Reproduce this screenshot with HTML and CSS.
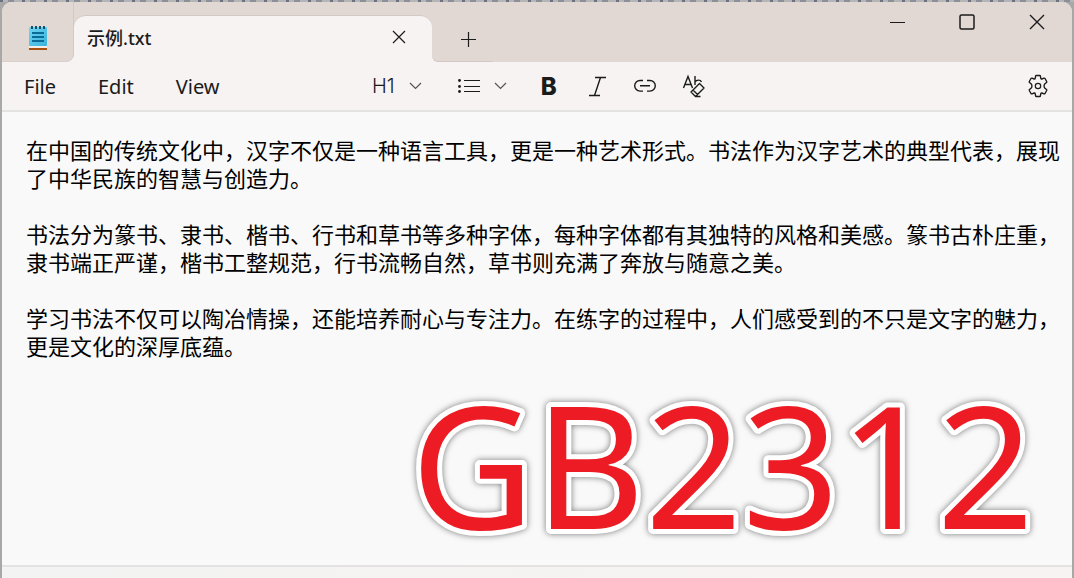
FILE: index.html
```html
<!DOCTYPE html>
<html lang="zh-CN">
<head>
<meta charset="utf-8">
<title>示例.txt</title>
<link rel="stylesheet" href="styles.css">
</head>
<body>
<div class="window">
  <header class="titlebar">
    <div class="app-icon">
      <svg width="20" height="26" viewBox="0 0 20 26" aria-hidden="true">
        <defs><linearGradient id="pad" x1="0" y1="0" x2="1" y2="1"><stop offset="0" stop-color="#6fd6f3"/><stop offset="1" stop-color="#38b3dc"/></linearGradient></defs>
        <path fill="#a8500f" d="M1 24h18v2H1z"/><path fill="#f4ece6" d="M1 22h18v2H1z"/>
        <rect x="1" y="3" width="18" height="19" rx="1" fill="url(#pad)"/>
        <path stroke="#0a6c96" stroke-width="2" d="M4 9h12M4 13h12M4 17h12"/>
        <path stroke="#14516b" stroke-width="2" d="M4 2v3M8 2v3M12 2v3M16 2v3"/>
      </svg>
    </div>
    <div class="tab">
      <span class="tab-name">示例.txt</span>
      <button class="icon-button" aria-label="Close tab"><svg width="14" height="14" viewBox="0 0 14 14"><path d="M1 1l12 12M13 1L1 13"/></svg></button>
    </div>
    <div class="new-tab"><button class="icon-button" aria-label="New tab"><svg width="16" height="16" viewBox="0 0 16 16"><path d="M8.500 1v15M1 8.500h15"/></svg></button></div>
    <div class="caption">
      <button class="icon-button" aria-label="Minimize"><svg width="16" height="16" viewBox="0 0 16 16"><path d="M1 8.500h15"/></svg></button>
      <button class="icon-button" aria-label="Maximize"><svg width="16" height="16" viewBox="0 0 16 16"><rect x="1" y="1" width="14" height="14" rx="1.500" stroke-width="1.500"/></svg></button>
      <button class="icon-button" aria-label="Close"><svg width="16" height="16" viewBox="0 0 16 16"><path stroke-width="1.400" d="M1 1l14 14M15 1L1 15"/></svg></button>
    </div>
  </header>
  <nav class="toolbar">
    <div class="menus">
      <button class="menu">File</button><button class="menu">Edit</button><button class="menu">View</button>
    </div>
    <div class="tools">
      <button class="tool heading" aria-label="Heading">H1 <svg class="chevron" width="13" height="8" viewBox="0 0 13 8"><path d="M1 1l5.500 5.500L12 1"/></svg></button>
      <button class="tool list" aria-label="List"><svg width="22" height="16" viewBox="0 0 22 16"><path d="M6 2.500h16M6 8.500h16M6 13.500h16"/><g fill="#1b1b1b" stroke="none"><circle cx="1.500" cy="2.500" r="1.400"/><circle cx="1.500" cy="8.500" r="1.400"/><circle cx="1.500" cy="13.500" r="1.400"/></g></svg><svg class="chevron" width="13" height="8" viewBox="0 0 13 8"><path d="M1 1l5.500 5.500L12 1"/></svg></button>
      <button class="tool bold" aria-label="Bold">B</button>
      <button class="tool" aria-label="Italic"><svg width="24" height="24" viewBox="0 0 24 24"><path stroke-width="1.400" d="M10 3.500h11M4 21.500h11M15.500 3.500l-6 18"/></svg></button>
      <button class="tool" aria-label="Link"><svg width="24" height="24" viewBox="0 0 24 24"><path stroke-width="1.400" d="M10 6.500H7a5.300 5.300 0 0 0 0 10.600h3M14 6.500h3a5.300 5.300 0 0 1 0 10.600h-3M7 11.800h10"/></svg></button>
      <button class="tool" aria-label="Clear formatting"><svg width="24" height="24" viewBox="0 0 24 24"><path stroke-width="1.400" d="M2.500 14L7 2.500 11.500 14M4 10.500h6M14 2v9M14 8c1.500-2.500 5.500-2.500 6.500 0"/><path stroke-width="1.400" stroke-linejoin="round" d="M18.500 9.500L23 14l-8.500 8.500L10 18zM12 16l4.500 4.500M14 22.500h5.500"/></svg></button>
    </div>
    <button class="tool settings" aria-label="Settings"><svg width="24" height="24" viewBox="0 0 24 24"><circle cx="12" cy="12" r="2.700"/><path stroke-width="1.400" stroke-linejoin="round" d="M10.300 1.500h3.400q.6 0 .7.600l.4 2.300q.2.800 1 .6l2.200-.8q.6-.2 1 .3l1.700 3q.3.600-.2 1l-1.800 1.500q-.6.500-.6 2t.6 2l1.800 1.500q.5.400.2 1l-1.700 3q-.4.500-1 .3l-2.200-.8q-.8-.2-1 .6l-.4 2.300q-.1.600-.7.600h-3.400q-.6 0-.7-.6l-.4-2.300q-.2-.8-1-.6l-2.200.8q-.6.200-1-.3l-1.700-3q-.3-.6.200-1L5.300 14q.6-.5.600-2t-.6-2L3.500 8.500q-.5-.4-.2-1l1.700-3q.4-.5 1-.3l2.200.8q.8.200 1-.6l.4-2.300q.1-.6.700-.6z"/></svg></button>
  </nav>
  <main class="document">
    <textarea class="editor" aria-label="Document text" spellcheck="false">在中国的传统文化中，汉字不仅是一种语言工具，更是一种艺术形式。书法作为汉字艺术的典型代表，展现了中华民族的智慧与创造力。

书法分为篆书、隶书、楷书、行书和草书等多种字体，每种字体都有其独特的风格和美感。篆书古朴庄重，隶书端正严谨，楷书工整规范，行书流畅自然，草书则充满了奔放与随意之美。

学习书法不仅可以陶冶情操，还能培养耐心与专注力。在练字的过程中，人们感受到的不只是文字的魅力，更是文化的深厚底蕴。</textarea>
    <svg class="stamp" width="640" height="260" viewBox="0 0 640 260"><text x="622" y="194" text-anchor="end">GB2312</text></svg>
  </main>
  <footer class="statusbar"></footer>
</div>
</body>
</html>
```
FILE: styles.css
```css
* { box-sizing: border-box; }
body {
  margin: 0;
  height: 100vh;
  padding: 2px 2px 0;
  overflow: hidden;
  background:
    repeating-linear-gradient(90deg, #6b7180 0 3px, #b5b5b5 3px 8px, #8a8f99 8px 14px, #b5b5b5 14px 22px) top / 100% 2px no-repeat,
    #a8a8a8;
  color: #1b1b1b;
  font-family: "Noto Sans", "Noto Sans CJK SC", sans-serif;
}
button {
  display: flex;
  align-items: center;
  justify-content: center;
  padding: 0;
  border: 0;
  background: none;
  color: inherit;
  font: inherit;
}
svg { display: block; fill: none; stroke: #1b1b1b; stroke-width: 1.2; }
.app-icon svg { stroke: none; }
.window {
  height: 100%;
  display: flex;
  flex-direction: column;
  overflow: hidden;
  border-radius: 10px 10px 0 0;
  background: #f9f9f9;
}
.titlebar { display: flex; height: 60px; flex: none; background: linear-gradient(#e1d8d3 50px, #f6f3f2 50px); }
.app-icon {
  width: 72px;
  padding: 22px 0 0 26px;
  border-right: 1px solid #d3c8c5;
  border-bottom: 1px solid #d9cfcb;
  border-bottom-right-radius: 8px;
  background: #e1d8d3;
}
.tab {
  width: 358px;
  margin-top: 13px;
  padding: 0 26px 4px 13px;
  display: flex;
  align-items: center;
  justify-content: space-between;
  border-top: 1px solid #d3c8c5;
  border-radius: 12px 12px 0 0;
  background: #f6f3f2;
}
.tab-name { font-size: 18px; font-weight: 500; }
.new-tab {
  width: 61px;
  padding: 15px 6px 0 16px;
  display: flex;
  align-items: center;
  justify-content: center;
  border-bottom: 1px solid #d3c8c5;
  border-bottom-left-radius: 6px;
  background: #e1d8d3;
}
.caption {
  flex: 1;
  display: flex;
  justify-content: flex-end;
  gap: 54px;
  padding: 12px 27px 0 0;
  align-items: flex-start;
  background: #e1d8d3;
}
.toolbar {
  flex: none;
  display: flex;
  height: 50px;
  padding: 0 22px;
  align-items: center;
  border-bottom: 2px solid #e5e3e2;
  background: #f6f3f2;
}
.menus { display: flex; gap: 42px; width: 348px; padding-top: 2px; font-size: 20px; line-height: 28px; }
.tools { display: flex; align-items: center; gap: 24px; }
.heading { gap: 14px; margin-right: 12px; font: 300 20px Inter, sans-serif; }
.list { gap: 14px; margin-right: 10px; }
.chevron { stroke: #555; }
.bold { margin-right: 4px; font: 800 24px Inter, sans-serif; }
.settings { margin-left: auto; }
.document { position: relative; flex: 1; display: flex; }
.editor {
  flex: 1;
  padding: 23px 10px 0 24px;
  border: 0;
  outline: 0;
  resize: none;
  overflow: hidden;
  background: #f9f9f9;
  color: #000;
  font: 22px/28px "Noto Sans CJK SC", sans-serif;
  text-spacing-trim: space-all;
}
.stamp {
  position: absolute;
  right: 20px;
  bottom: -30px;
  fill: #ed1c24;
  font: 170px "Noto Sans", sans-serif;
  stroke: #fff;
  stroke-width: 10px;
  stroke-linejoin: round;
  paint-order: stroke fill;
  filter: drop-shadow(0 0 3px #777);
  pointer-events: none;
}
.statusbar { flex: none; height: 13px; border-top: 2px solid #e5e3e2; background: linear-gradient(90deg, #f3f3f3, #f6f3f2 70%); }
```
